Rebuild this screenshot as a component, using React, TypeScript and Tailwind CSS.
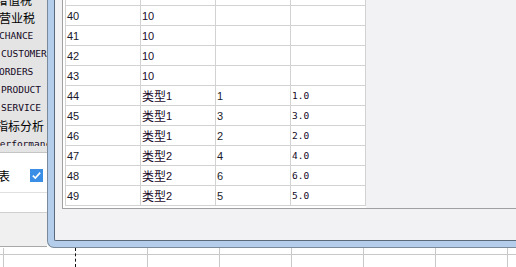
const listItems: { text: string; cjk?: boolean; shift: string }[] = [
  { text: "增值税", cjk: true, shift: "ml-[-4px]" },
  { text: "营业税", cjk: true, shift: "ml-[-1px]" },
  { text: "CHANCE", shift: "ml-[-1px]" },
  { text: "CUSTOMER", shift: "ml-[1px]" },
  { text: "ORDERS", shift: "ml-[-1px]" },
  { text: "PRODUCT", shift: "ml-[1px]" },
  { text: "SERVICE", shift: "ml-[1px]" },
  { text: "指标分析", cjk: true, shift: "ml-[-4px]" },
  { text: "Performance", shift: "ml-[-6px]" },
];

const rows: [string, string, string, string][] = [
  ["39", "10", "", ""],
  ["40", "10", "", ""],
  ["41", "10", "", ""],
  ["42", "10", "", ""],
  ["43", "10", "", ""],
  ["44", "类型1", "1", "1.0"],
  ["45", "类型1", "3", "3.0"],
  ["46", "类型1", "2", "2.0"],
  ["47", "类型2", "4", "4.0"],
  ["48", "类型2", "6", "6.0"],
  ["49", "类型2", "5", "5.0"],
];

function TypeCell({ value }: { value: string }) {
  if (value.startsWith("类型")) {
    return (
      <>
        <span className="text-[12px] font-['Noto_Sans_CJK_SC',sans-serif]">类型</span>
        {value.slice(2)}
      </>
    );
  }
  return <>{value}</>;
}

function LeftPanel() {
  return (
    <div className="w-[47px] shrink-0 h-[248px] flex flex-col overflow-hidden">
      <div className="h-[153px] bg-[#e4e4e4] border-b border-[#c4c4c4]">
        <div className="h-[146px] overflow-hidden">
          <div className="mt-[-9px]">
            {listItems.map((item) => (
              <div key={item.text} className="h-[18px] flex items-center whitespace-nowrap">
                <span
                  className={
                    item.cjk
                      ? `${item.shift} text-[12px] text-black font-['Noto_Sans_CJK_SC',sans-serif]`
                      : `${item.shift} text-[9.5px] text-[#14081f] font-['DejaVu_Sans_Mono',monospace]`
                  }
                >
                  {item.text}
                </span>
              </div>
            ))}
          </div>
        </div>
      </div>
      <div className="h-[40px] bg-white border-b border-[#e0e0e0] flex items-start pt-[16px]">
        <span className="ml-[-2px] text-[12px] leading-[14px] text-black font-['Noto_Sans_CJK_SC',sans-serif]">
          表
        </span>
        <div className="ml-[20px] w-[13px] h-[13px] bg-[#3a8ee6] flex items-center justify-center">
          <svg width="13" height="13" viewBox="0 0 13 13">
            <path d="M2.8 6.6 L5.3 9.1 L10.2 3.6" fill="none" stroke="white" strokeWidth="1.6" />
          </svg>
        </div>
      </div>
      <div className="h-[20px] bg-white border-b border-[#d0d0d0]" />
      <div className="h-[34px] bg-[#f0f0f0] border-b border-[#a8a8a8]" />
    </div>
  );
}

function DataTable() {
  return (
    <div className="mt-[-14px] w-fit bg-white pl-[2px] pb-[2px]">
      <div className="border-l border-[#d2d2d2]">
        {rows.map((r) => (
          <div key={r[0]} className="flex h-[20px] border-b border-[#d2d2d2]">
            <div className="w-[75px] shrink-0 border-r border-[#d2d2d2] flex items-center pl-[1px] pt-[1px] text-[11px] text-[#1a1a2a] font-['Liberation_Sans',sans-serif]">
              {r[0]}
            </div>
            <div className="w-[75px] shrink-0 border-r border-[#d2d2d2] flex items-center pl-[1px] pt-[1px] text-[11px] text-[#1a0a2a] font-['Liberation_Sans',sans-serif]">
              <TypeCell value={r[1]} />
            </div>
            <div className="w-[75px] shrink-0 border-r border-[#d2d2d2] flex items-center pl-[1px] pt-[1px] text-[11px] text-[#1a1a2a] font-['Liberation_Sans',sans-serif]">
              {r[2]}
            </div>
            <div className="w-[75px] shrink-0 border-r border-[#d2d2d2] flex items-center pl-[1px] pt-[1px] text-[9.5px] text-[#14081f] font-['DejaVu_Sans_Mono',monospace]">
              {r[3]}
            </div>
          </div>
        ))}
      </div>
    </div>
  );
}

function Dialog() {
  return (
    <div className="flex-1 min-w-0 h-[248px] border-l border-b border-[#7b8a9a] rounded-bl-[7px] bg-[#b3cdea] pl-[6px] pb-[6px]">
      <div className="h-full border-l border-b border-[#5a6a7c] rounded-bl-[2px] bg-[#f2f2f4]">
        <div className="ml-[7px] h-[209px] border-l border-b border-[#a0a0a0] overflow-hidden">
          <DataTable />
        </div>
      </div>
    </div>
  );
}

function SheetStrip() {
  const cols = [0, 1, 2, 3, 4, 5, 6, 7];
  return (
    <div className="flex h-[19px] bg-white">
      <div className="w-[3px] shrink-0">
        <div className="h-[7px] border-b border-[#c8c8c8]" />
      </div>
      {cols.map((c) => (
        <div
          key={c}
          className={
            c === 1
              ? "w-[72px] shrink-0 h-full border-l border-dashed border-[#111]"
              : "w-[72px] shrink-0 h-full border-l border-[#c8c8c8]"
          }
        >
          <div className="h-[7px] border-b border-[#c8c8c8]" />
        </div>
      ))}
    </div>
  );
}

export default function App() {
  return (
    <div className="w-[516px] h-[267px] overflow-hidden bg-white flex flex-col">
      <div className="flex h-[248px] items-start">
        <LeftPanel />
        <Dialog />
      </div>
      <SheetStrip />
    </div>
  );
}
